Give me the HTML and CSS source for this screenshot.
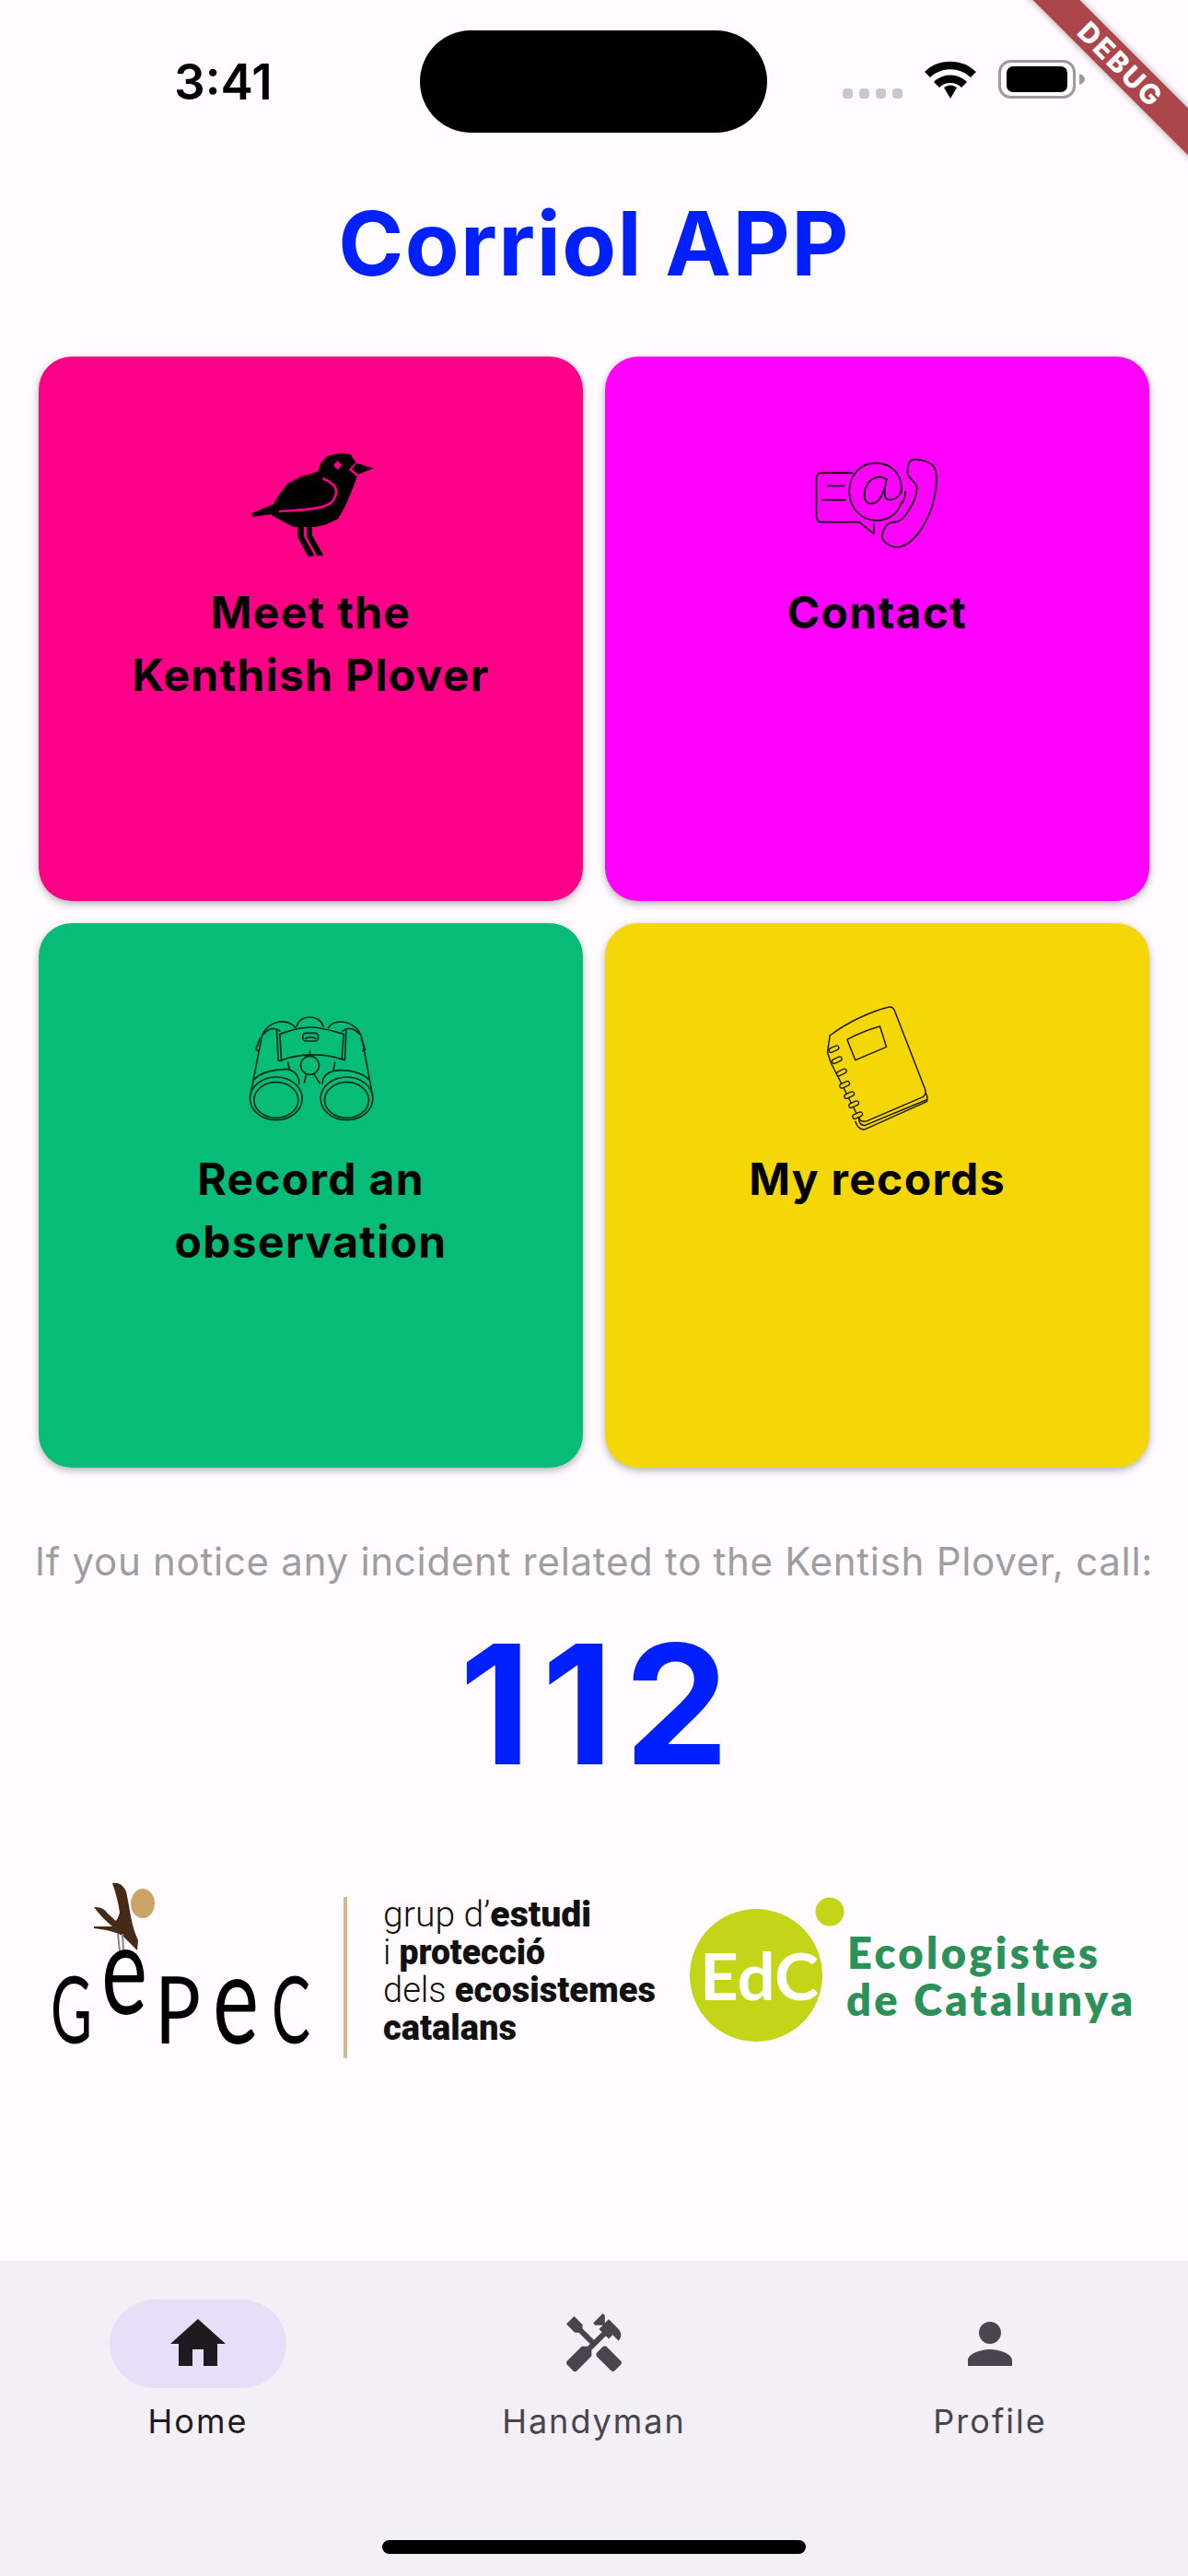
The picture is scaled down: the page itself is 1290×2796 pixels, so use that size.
FILE: index.html
```html
<!DOCTYPE html>
<html lang="en">
<head>
<meta charset="utf-8">
<title>Corriol APP</title>
<link rel="stylesheet" href="styles.css">
</head>
<body>
<div class="screen">
  <div class="debug-banner">DEBUG</div>
  <header class="status">
    <div class="time">3:41</div>
    <div class="island"></div>
    <svg class="status-icons" viewBox="0 0 265 42" width="265" height="42">
      <g fill="#c9c9c9">
        <rect x="0" y="31" width="11" height="11" rx="4"/>
        <rect x="18" y="31" width="11" height="11" rx="4"/>
        <rect x="36" y="31" width="11" height="11" rx="4"/>
        <rect x="54" y="31" width="11" height="11" rx="4"/>
      </g>
      <g fill="none" stroke="#000" stroke-width="8.5">
        <path d="M92 16 A36 36 0 0 1 142 16"/>
        <path d="M102 27 A21 21 0 0 1 132 27"/>
      </g>
      <path d="M117 42 L110 30 A11 11 0 0 1 124 30 Z" fill="#000"/>
      <rect x="170.500" y="1.500" width="81" height="39" rx="12" fill="none" stroke="#9b9b9b" stroke-width="3"/>
      <rect x="178" y="7" width="66" height="28" rx="7" fill="#000"/>
      <path d="M257 15 Q263 17 263 21 Q263 25 257 27 Z" fill="#9b9b9b"/>
    </svg>
  </header>

  <h1 class="title">Corriol APP</h1>

  <main class="grid">
    <a class="card card-pink">
      <svg class="card-icon" viewBox="97.500 39 450 450">
        <path d="M128 292 L200 262 L215 235 L245 195 L290 172 L345 155 L352 130 L375 105 L420 95 L450 100 L468 125 L455 138 L445 150 L472 172 L460 205 L435 265 L410 310 L370 328 L335 336 L265 336 L215 310 L190 295 L130 303 Z" fill="#000"/>
        <path d="M278 322 H298 V365 L333 430 L312 432 L278 368 Z M308 322 H325 V362 L362 428 L342 430 L308 368 Z M470 128 L525 145 L475 165 L455 148 Z" fill="#000"/>
        <path d="M408 120 L423 135 L408 150 L395 135 Z" fill="#fe0087"/>
        <path d="M218 285 C290 282 350 278 380 262 C405 245 410 215 395 200 C385 190 370 182 360 178" fill="none" stroke="#fe0087" stroke-width="8"/>
      </svg>
      <span class="card-label">Meet the<br>Kenthish Plover</span>
    </a>
    <a class="card card-magenta">
      <svg class="card-icon" viewBox="52.500 9 450 450">
        <g fill="none" stroke="#000" stroke-width="5" stroke-linejoin="round" stroke-linecap="round">
          <path d="M195 130 H95 Q78 130 78 148 V270 Q78 290 95 290 H218 L265 328 V295"/>
          <path d="M115 172 H168 M97 218 H172"/>
          <path d="M355 195 C360 130 320 98 270 98 C220 98 185 140 185 190 C185 245 225 285 275 285 C315 285 345 260 355 225"/>
          <path d="M305 150 C285 135 250 145 238 180 C228 215 240 232 258 230 C285 228 300 190 307 150 C298 190 295 218 318 218 C345 215 355 195 355 175"/>
          <path d="M368 190 Q368 210 358 228"/>
          <path d="M385 90 C400 80 440 90 460 108 C475 130 470 190 455 240 C430 310 390 365 345 372 C320 372 292 355 292 335 C295 310 310 290 330 290 C345 290 355 285 370 265 C390 235 408 205 405 175 C400 155 378 150 375 130 C375 110 378 95 385 90 Z"/>
        </g>
      </svg>
      <span class="card-label">Contact</span>
    </a>
    <a class="card card-green">
      <svg class="card-icon" viewBox="37.500 -3 450 450">
        <g fill="none" stroke="#012a20" stroke-width="5" stroke-linejoin="round" stroke-linecap="round">
          <ellipse cx="148" cy="315" rx="72" ry="58"/>
          <ellipse cx="148" cy="310" rx="85" ry="70"/>
          <ellipse cx="378" cy="315" rx="72" ry="58"/>
          <ellipse cx="378" cy="310" rx="85" ry="70"/>
          <path d="M64 300 L100 115 C105 85 130 65 160 60 C185 58 205 68 212 82"/>
          <path d="M462 300 L428 115 C420 85 395 62 360 60 C340 60 325 68 318 80"/>
          <path d="M108 100 C125 80 145 78 160 90 M420 100 C400 80 380 78 365 90"/>
          <path d="M160 100 L165 185 C220 165 300 160 362 182 L368 100 C330 90 300 78 258 78 C220 78 190 90 160 100 Z"/>
          <path d="M150 88 L155 185 L165 188 M376 88 L372 185 L362 182"/>
          <path d="M215 75 C225 35 290 35 302 75"/>
          <circle cx="258" cy="202" r="30"/>
          <path d="M258 155 V172"/>
          <rect x="235" y="97" width="50" height="26" rx="10"/>
          <path d="M243 115 Q260 105 277 115"/>
          <path d="M75 250 C95 225 145 213 185 215 C210 220 225 240 222 262"/>
          <path d="M452 250 C430 225 380 213 335 220 C310 226 300 240 298 262"/>
          <path d="M186 192 L192 215 M340 192 L334 220 M246 232 L240 258 M272 232 L290 260"/>
          <path d="M95 115 L82 150 L90 155 M425 115 L438 150 L430 155"/>
        </g>
      </svg>
      <span class="card-label">Record an<br>observation</span>
    </a>
    <a class="card card-yellow">
      <svg class="card-icon" viewBox="22.500 27 450 450">
        <g fill="none" stroke="#1c1800" stroke-width="4.500" stroke-linejoin="round" stroke-linecap="round">
          <path d="M92 135 C150 90 230 55 285 42 Q298 40 303 55 L402 310 Q408 325 395 335 L215 412 Q195 420 187 405"/>
          <path d="M92 135 L84 190 L96 225 L187 405"/>
          <path d="M187 405 Q185 425 205 428 L405 345 M175 415 Q185 445 207 440 L408 350 Q412 335 404 322"/>
          <path d="M148 148 Q200 120 255 105 L276 172 L175 215 Z"/>
          <g stroke-width="4" fill="#f5d708">
            <rect x="88" y="172" width="34" height="14" rx="7" transform="rotate(-25 105 179)"/>
            <rect x="98" y="208" width="34" height="14" rx="7" transform="rotate(-25 115 215)"/>
            <rect x="113" y="248" width="34" height="14" rx="7" transform="rotate(-25 130 255)"/>
            <rect x="123" y="288" width="34" height="14" rx="7" transform="rotate(-25 140 295)"/>
            <rect x="138" y="322" width="34" height="14" rx="7" transform="rotate(-25 155 329)"/>
            <rect x="153" y="352" width="34" height="14" rx="7" transform="rotate(-25 170 359)"/>
            <rect x="165" y="388" width="34" height="14" rx="7" transform="rotate(-25 182 395)"/>
          </g>
        </g>
      </svg>
      <span class="card-label">My records</span>
    </a>
  </main>

  <p class="notice">If you notice any incident related to the Kentish Plover, call:</p>
  <p class="emergency">112</p>

  <section class="logos">
    <svg class="logo-gepec" viewBox="40 2030 680 220" width="680" height="220">
      <ellipse cx="155" cy="2065" rx="13" ry="16" fill="#cda468"/>
      <path d="M122 2043 Q132 2041 137 2052 C142 2075 142 2088 150 2105 L149 2116 L133 2100 C125 2096 118 2094 102 2092 L102 2090 L122 2090 Q128 2082 130 2075 Q128 2060 122 2043 Z M102 2069 Q112 2068 117 2076 L127 2085 L122 2090 Q110 2080 102 2069 Z" fill="#472a17"/>
      <path d="M128 2098 L130 2117 M133 2098 L134 2116" stroke="#8c8378" stroke-width="2"/>
      <text class="gepec-word"><tspan x="55" y="2217" class="gepec-cap" textLength="45" lengthAdjust="spacingAndGlyphs">G</tspan><tspan x="110" y="2185" class="gepec-low" textLength="50" lengthAdjust="spacingAndGlyphs">e</tspan><tspan x="168" y="2217" class="gepec-cap" textLength="50" lengthAdjust="spacingAndGlyphs">P</tspan><tspan x="231" y="2217" class="gepec-low" textLength="50" lengthAdjust="spacingAndGlyphs">e</tspan><tspan x="295" y="2217" class="gepec-cap" textLength="42" lengthAdjust="spacingAndGlyphs">C</tspan></text>
      <rect x="373" y="2058" width="4" height="175" fill="#d9b88f"/>
      <g class="gepec-text">
        <text x="416" y="2090" textLength="226" lengthAdjust="spacingAndGlyphs">grup d’<tspan class="strong">estudi</tspan></text>
        <text x="416" y="2131" textLength="176" lengthAdjust="spacingAndGlyphs">i <tspan class="strong">protecció</tspan></text>
        <text x="416" y="2172" textLength="296" lengthAdjust="spacingAndGlyphs">dels <tspan class="strong">ecosistemes</tspan></text>
        <text x="416" y="2213" class="strong" textLength="145" lengthAdjust="spacingAndGlyphs">catalans</text>
      </g>
    </svg>
    <svg class="logo-edc" viewBox="730 2030 530 220" width="530" height="220">
      <circle cx="821" cy="2143" r="72" fill="#c3d516"/>
      <circle cx="901" cy="2074" r="15.500" fill="#c3d516"/>
      <text x="760" y="2170" class="edc-mark" textLength="129" lengthAdjust="spacingAndGlyphs">EdC</text>
      <text x="920" y="2136" class="edc-name" textLength="272" lengthAdjust="spacing">Ecologistes</text>
      <text x="919" y="2187" class="edc-name" textLength="311" lengthAdjust="spacing">de Catalunya</text>
    </svg>
  </section>

  <nav class="nav">
    <div class="nav-item active">
      <div class="nav-pill">
        <svg class="nav-icon" viewBox="0 0 24 24"><path d="M10 20v-6h4v6h5v-8h3L12 3 2 12h3v8z"/></svg>
      </div>
      <span class="nav-label">Home</span>
    </div>
    <div class="nav-item">
      <div class="nav-pill">
        <svg class="nav-icon" viewBox="0 0 24 24"><path d="M21.67 18.17l-5.3-5.3h-.99l-2.54 2.54v.99l5.3 5.3c.39.39 1.02.39 1.41 0l2.12-2.12c.39-.38.39-1.02 0-1.41z"/><path d="M17.34 10.19l1.41-1.41 2.12 2.12c1.17-1.17 1.17-3.07 0-4.24l-3.54-3.54-1.41 1.41V1.71L15.22 1l-3.54 3.54.71.71h2.83l-1.41 1.41 1.06 1.06-2.89 2.89-4.13-4.13V5.06L4.83 2.04 2 4.87l3.03 3.03h1.41l4.13 4.13-.85.85H7.6l-5.3 5.3c-.39.39-.39 1.02 0 1.41l2.12 2.12c.39.39 1.02.39 1.41 0l5.3-5.3v-2.12l5.15-5.15 1.06 1.06z"/></svg>
      </div>
      <span class="nav-label">Handyman</span>
    </div>
    <div class="nav-item">
      <div class="nav-pill">
        <svg class="nav-icon" viewBox="0 0 24 24"><path d="M12 12c2.21 0 4-1.79 4-4s-1.79-4-4-4-4 1.79-4 4 1.79 4 4 4zm0 2c-2.67 0-8 1.34-8 4v2h16v-2c0-2.66-5.33-4-8-4z"/></svg>
      </div>
      <span class="nav-label">Profile</span>
    </div>
    <div class="home-indicator"></div>
  </nav>
</div>
</body>
</html>
```

FILE: styles.css
```css
* { box-sizing: border-box; }

html, body {
  margin: 0;
  padding: 0;
}

body {
  font-family: Inter, "Liberation Sans", sans-serif;
  background: #fffbff;
}

.screen {
  position: relative;
  width: 1290px;
  height: 2796px;
  overflow: hidden;
  display: flex;
  flex-direction: column;
  background: #fffbff;
}

.debug-banner {
  position: absolute;
  left: 1067px;
  top: 52px;
  width: 300px;
  height: 36px;
  transform: rotate(45deg);
  background: rgba(150, 25, 30, 0.8);
  box-shadow: 0 0 9px rgba(0, 0, 0, 0.35);
  color: #fff;
  font-weight: 800;
  font-size: 30px;
  line-height: 36px;
  letter-spacing: 2.5px;
  text-align: center;
  z-index: 5;
}

.status {
  height: 210px;
  padding: 33px 0 0 189px;
  display: flex;
  align-items: flex-start;
}

.time {
  width: 267px;
  margin-top: 25px;
  font-size: 53px;
  font-weight: 600;
  line-height: 62px;
  color: #000;
}

.island {
  width: 377px;
  height: 111px;
  border-radius: 56px;
  background: #000;
}

.status-icons {
  display: block;
  margin: 32px 0 0 82px;
}

.title {
  margin: 0;
  height: 108px;
  font-size: 96px;
  font-weight: 700;
  line-height: 108px;
  letter-spacing: 1.5px;
  text-align: center;
  color: #0020ff;
}

.grid {
  margin-top: 69px;
  padding: 0 42px;
  display: grid;
  grid-template-columns: 591px 591px;
  grid-auto-rows: 591px;
  gap: 24px;
}

.card {
  padding-top: 86px;
  border-radius: 36px;
  display: flex;
  flex-direction: column;
  align-items: center;
  box-shadow: 0 3px 9px rgba(0, 0, 0, 0.3);
}

.card-pink { background: #fe0087; }
.card-magenta { background: #ff00ff; }
.card-green { background: #06bc76; }
.card-yellow { background: #f5d708; }

.card-icon {
  display: block;
  width: 150px;
  height: 150px;
  margin-bottom: 8px;
}

.card-label {
  font-size: 48px;
  font-weight: 700;
  line-height: 68px;
  letter-spacing: 1.3px;
  text-align: center;
  color: #000;
}

.notice {
  margin: 72px 0 0;
  font-size: 42px;
  line-height: 60px;
  letter-spacing: 0.72px;
  text-align: center;
  color: #9e9e9e;
}

.emergency {
  margin: 16px 0 0;
  padding-left: 12px;
  font-size: 180px;
  font-weight: 700;
  line-height: 218px;
  letter-spacing: 12px;
  text-align: center;
  color: #0020ff;
}

.logos {
  margin-top: 72px;
  padding-left: 40px;
  display: flex;
  gap: 10px;
}

.logo-gepec, .logo-edc { display: block; flex: none; }

.gepec-cap {
  font-family: Lato, sans-serif;
  font-weight: 400;
  font-size: 100px;
}

.gepec-low {
  font-family: Lato, sans-serif;
  font-weight: 400;
  font-size: 136px;
}

.gepec-text {
  font-family: Roboto, sans-serif;
  font-size: 38px;
  font-weight: 300;
  fill: #111;
}

.strong { font-weight: 900; }

.edc-mark {
  font-family: Lato, sans-serif;
  font-weight: 700;
  font-size: 70px;
  fill: #fff;
}

.edc-name {
  font-family: Lato, sans-serif;
  font-weight: 800;
  font-size: 47px;
  fill: #2b9158;
}

.nav {
  position: relative;
  margin-top: auto;
  height: 342px;
  padding-top: 42px;
  display: grid;
  grid-template-columns: repeat(3, 1fr);
  align-items: start;
  background: #f3eff6;
}

.nav-item {
  display: flex;
  flex-direction: column;
  align-items: center;
  color: #49454f;
  fill: #49454f;
}

.nav-pill {
  width: 192px;
  height: 96px;
  border-radius: 48px;
  display: flex;
  align-items: center;
  justify-content: center;
}

.nav-item.active { color: #1d1b20; fill: #1d1b20; }
.nav-item.active .nav-pill { background: #e8def8; }

.nav-icon {
  display: block;
  width: 72px;
  height: 72px;
}

.nav-label {
  margin-top: 12px;
  font-size: 36px;
  font-weight: 400;
  line-height: 48px;
  letter-spacing: 2px;
}

.home-indicator {
  position: absolute;
  left: 415px;
  top: 303px;
  width: 460px;
  height: 15px;
  border-radius: 8px;
  background: #000;
}
```
